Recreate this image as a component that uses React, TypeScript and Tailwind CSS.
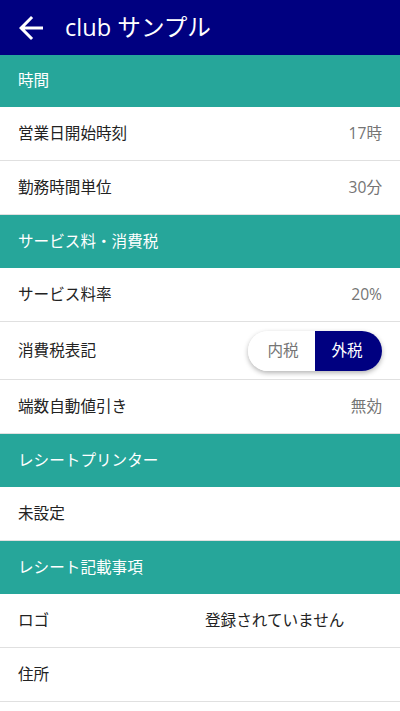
const font = { fontFamily: '"Open Sans", "Noto Sans CJK JP", sans-serif' };

function BackArrow() {
  return (
    <svg viewBox="0 0 24 24" className="w-9 h-9 fill-white" aria-hidden>
      <path d="M20 11H7.83l5.59-5.59L12 4l-8 8 8 8 1.41-1.41L7.83 13H20v-2z" />
    </svg>
  );
}

function Section({ title, first }: { title: string; first?: boolean }) {
  return (
    <div
      className={`${first ? "h-[52px]" : "h-[53px]"} flex items-center px-[18px] bg-[#26a69a] text-white text-[15.6px]`}
    >
      {title}
    </div>
  );
}

function Row({ label, value }: { label: string; value?: string }) {
  return (
    <div className="h-[54px] flex items-center justify-between px-[18px] border-b border-[#e0e0e0] bg-white">
      <span className="text-[15.6px] text-[#222]">{label}</span>
      {value && <span className="text-[15.6px] text-[#757575]">{value}</span>}
    </div>
  );
}

export default function App() {
  return (
    <div className="min-h-screen bg-white" style={font}>
      <header className="h-[55px] flex items-center bg-[#000080] text-white">
        <div className="ml-[13px]">
          <BackArrow />
        </div>
        <h1 className="ml-[16px] text-[23.6px] leading-none">club サンプル</h1>
      </header>

      <Section title="時間" first />
      <Row label="営業日開始時刻" value="17時" />
      <Row label="勤務時間単位" value="30分" />

      <Section title="サービス料・消費税" />
      <Row label="サービス料率" value="20%" />
      <div className="h-[58px] flex items-center justify-between px-[18px] border-b border-[#e0e0e0]">
        <span className="text-[15.6px] text-[#222]">消費税表記</span>
        <div className="flex h-[40px] rounded-full overflow-hidden shadow-[0_2px_5px_rgba(0,0,0,0.3)]">
          <button className="w-[67px] bg-white text-[15.6px] text-[#757575] pl-[3px]">内税</button>
          <button className="w-[67px] bg-[#000080] text-[15.6px] text-white pr-[3px]">外税</button>
        </div>
      </div>
      <Row label="端数自動値引き" value="無効" />

      <Section title="レシートプリンター" />
      <Row label="未設定" />

      <Section title="レシート記載事項" />
      <div className="h-[54px] flex items-center px-[18px] border-b border-[#e0e0e0]">
        <span className="w-[187px] text-[15.6px] text-[#222]">ロゴ</span>
        <span className="text-[15.6px] text-[#222]">登録されていません</span>
      </div>
      <Row label="住所" />
    </div>
  );
}
